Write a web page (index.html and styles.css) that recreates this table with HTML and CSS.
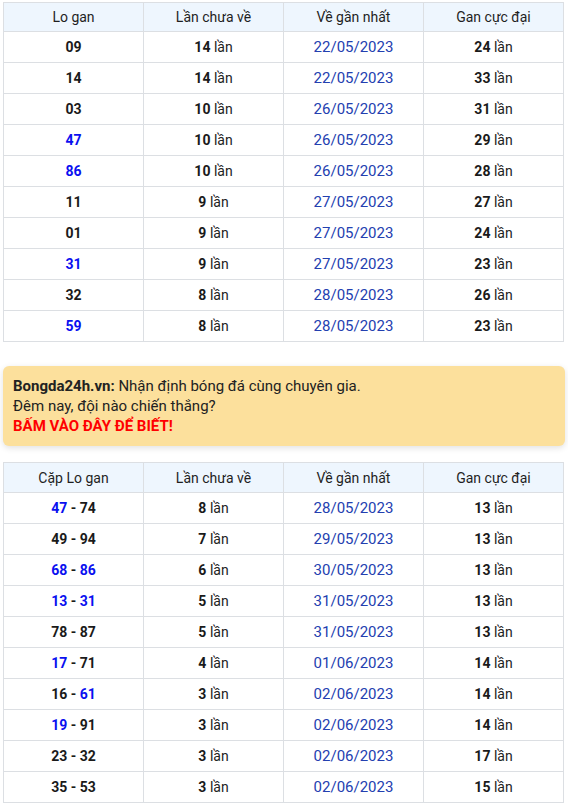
FILE: index.html
```html
<!DOCTYPE html>
<html lang="vi">
<head>
<meta charset="utf-8">
<link rel="stylesheet" href="styles.css">
</head>
<body>
<div class="page">
  <table class="gan">
    <thead>
      <tr><th>Lo gan</th><th>Lần chưa về</th><th>Về gần nhất</th><th>Gan cực đại</th></tr>
    </thead>
    <tbody>
      <tr><td><b>09</b></td><td><b>14</b> lần</td><td class="date">22/05/2023</td><td><b>24</b> lần</td></tr>
      <tr><td><b>14</b></td><td><b>14</b> lần</td><td class="date">22/05/2023</td><td><b>33</b> lần</td></tr>
      <tr><td><b>03</b></td><td><b>10</b> lần</td><td class="date">26/05/2023</td><td><b>31</b> lần</td></tr>
      <tr><td><b class="blue">47</b></td><td><b>10</b> lần</td><td class="date">26/05/2023</td><td><b>29</b> lần</td></tr>
      <tr><td><b class="blue">86</b></td><td><b>10</b> lần</td><td class="date">26/05/2023</td><td><b>28</b> lần</td></tr>
      <tr><td><b>11</b></td><td><b>9</b> lần</td><td class="date">27/05/2023</td><td><b>27</b> lần</td></tr>
      <tr><td><b>01</b></td><td><b>9</b> lần</td><td class="date">27/05/2023</td><td><b>24</b> lần</td></tr>
      <tr><td><b class="blue">31</b></td><td><b>9</b> lần</td><td class="date">27/05/2023</td><td><b>23</b> lần</td></tr>
      <tr><td><b>32</b></td><td><b>8</b> lần</td><td class="date">28/05/2023</td><td><b>26</b> lần</td></tr>
      <tr><td><b class="blue">59</b></td><td><b>8</b> lần</td><td class="date">28/05/2023</td><td><b>23</b> lần</td></tr>
    </tbody>
  </table>

  <div class="promo">
    <p><b>Bongda24h.vn:</b> Nhận định bóng đá cùng chuyên gia.</p>
    <p>Đêm nay, đội nào chiến thắng?</p>
    <p class="cta">BẤM VÀO ĐÂY ĐỂ BIẾT!</p>
  </div>

  <table class="gan gan-pairs">
    <thead>
      <tr><th>Cặp Lo gan</th><th>Lần chưa về</th><th>Về gần nhất</th><th>Gan cực đại</th></tr>
    </thead>
    <tbody>
      <tr><td><b class="blue">47</b><b> - 74</b></td><td><b>8</b> lần</td><td class="date">28/05/2023</td><td><b>13</b> lần</td></tr>
      <tr><td><b>49 - 94</b></td><td><b>7</b> lần</td><td class="date">29/05/2023</td><td><b>13</b> lần</td></tr>
      <tr><td><b class="blue">68</b><b> - </b><b class="blue">86</b></td><td><b>6</b> lần</td><td class="date">30/05/2023</td><td><b>13</b> lần</td></tr>
      <tr><td><b class="blue">13</b><b> - </b><b class="blue">31</b></td><td><b>5</b> lần</td><td class="date">31/05/2023</td><td><b>13</b> lần</td></tr>
      <tr><td><b>78 - 87</b></td><td><b>5</b> lần</td><td class="date">31/05/2023</td><td><b>13</b> lần</td></tr>
      <tr><td><b class="blue">17</b><b> - 71</b></td><td><b>4</b> lần</td><td class="date">01/06/2023</td><td><b>14</b> lần</td></tr>
      <tr><td><b>16 - </b><b class="blue">61</b></td><td><b>3</b> lần</td><td class="date">02/06/2023</td><td><b>14</b> lần</td></tr>
      <tr><td><b class="blue">19</b><b> - 91</b></td><td><b>3</b> lần</td><td class="date">02/06/2023</td><td><b>14</b> lần</td></tr>
      <tr><td><b>23 - 32</b></td><td><b>3</b> lần</td><td class="date">02/06/2023</td><td><b>17</b> lần</td></tr>
      <tr><td><b>35 - 53</b></td><td><b>3</b> lần</td><td class="date">02/06/2023</td><td><b>15</b> lần</td></tr>
    </tbody>
  </table>
</div>
</body>
</html>
```

FILE: styles.css
```css
html, body {
  margin: 0;
  padding: 0;
  background: #ffffff;
}

body {
  font-family: Roboto, "Liberation Sans", Arial, sans-serif;
  color: #222222;
}

.page {
  padding: 2px 4px 0 3px;
  display: flex;
  flex-direction: column;
}

.gan {
  width: 561px;
  border-collapse: collapse;
  table-layout: fixed;
  font-size: 14px;
}

.gan th,
.gan td {
  border: 1px solid #dcdfe3;
  text-align: center;
  padding: 0;
  vertical-align: middle;
}

.gan th {
  height: 28px;
  font-weight: 400;
  background: #eef6fe;
  color: #1f1f1f;
}

.gan-pairs th {
  height: 29px;
}

.gan td {
  height: 30px;
  color: #222222;
}

.gan b {
  font-weight: 700;
  color: #1a1a1a;
}

.gan b.blue {
  color: #0a10f0;
}

.gan td.date {
  color: #2340b0;
  font-size: 15px;
}

.promo {
  margin: 24px 0 16px;
  width: 562px;
  box-sizing: border-box;
  height: 80px;
  padding: 10px 10px;
  background: #fce09c;
  border-radius: 6px;
  box-shadow: 0 2px 6px rgba(0, 0, 0, 0.12);
  font-size: 15px;
  line-height: 20px;
  color: #222222;
}

.promo p {
  margin: 0;
}

.promo b {
  font-weight: 700;
}

.promo .cta {
  color: #ff0000;
  font-weight: 700;
}
```
